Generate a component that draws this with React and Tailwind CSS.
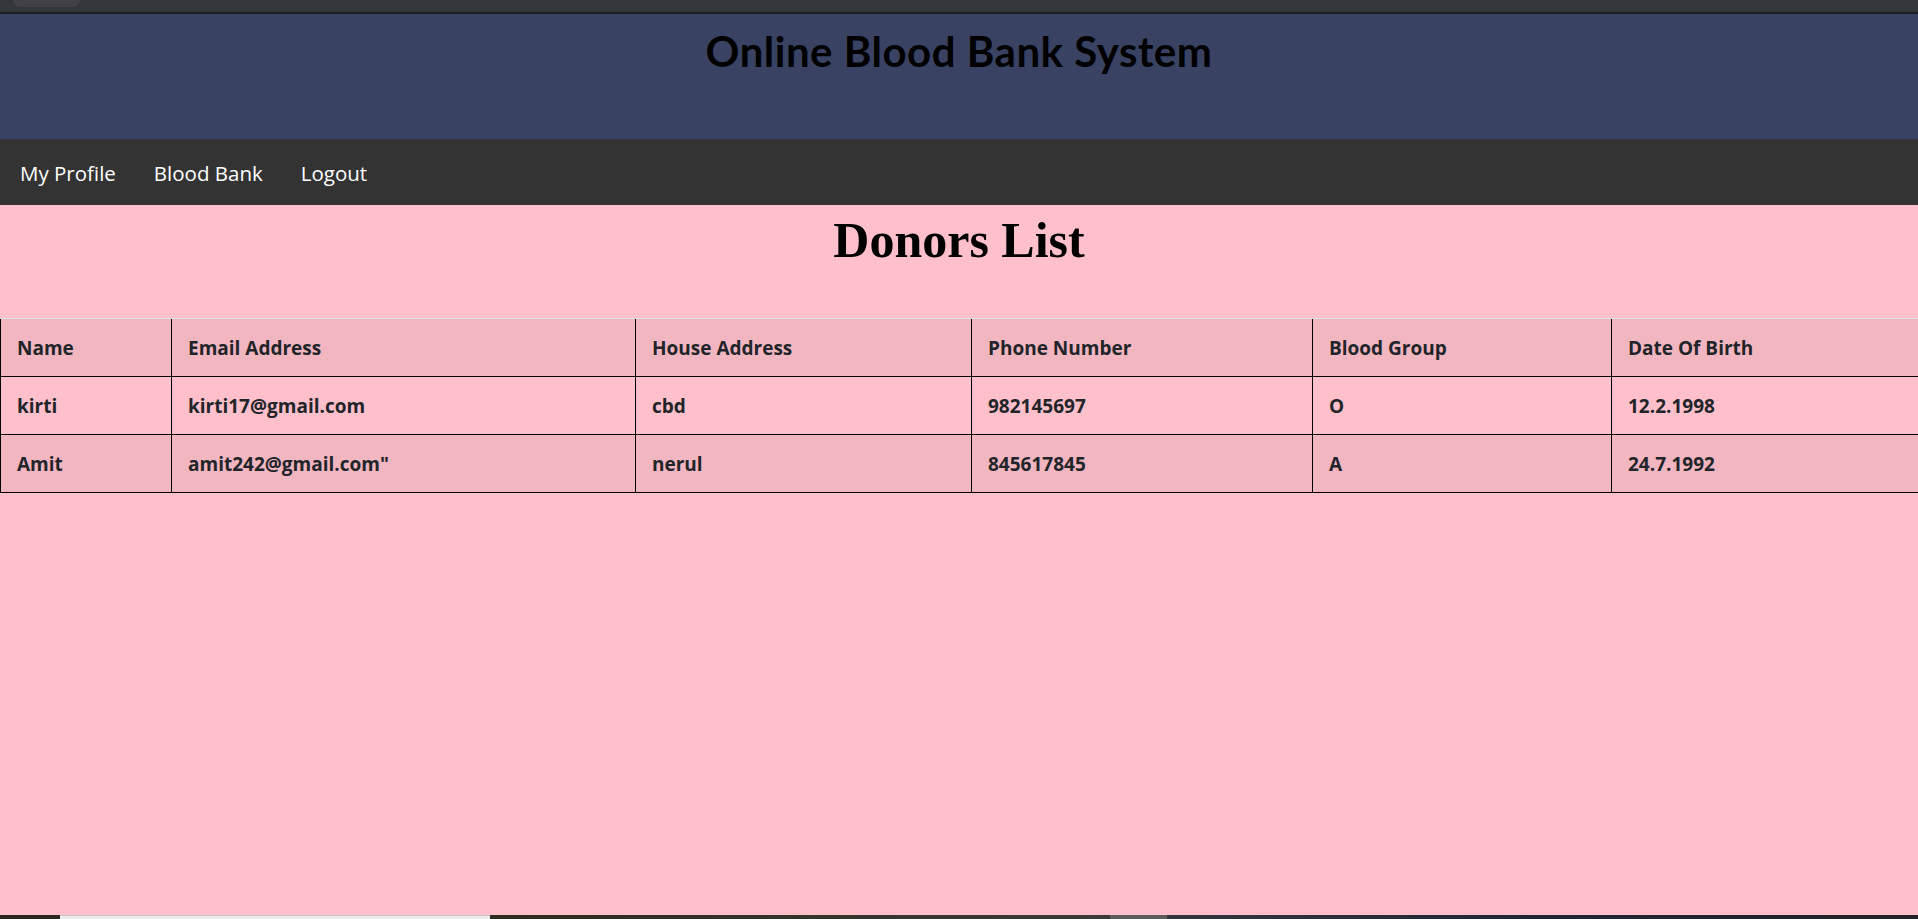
export default function App() {
  const rows = [
    ["kirti", "kirti17@gmail.com", "cbd", "982145697", "O", "12.2.1998"],
    ["Amit", 'amit242@gmail.com"', "nerul", "845617845", "A", "24.7.1992"],
  ];
  const heads = ["Name", "Email Address", "House Address", "Phone Number", "Blood Group", "Date Of Birth"];
  const grid = "grid grid-cols-[171px_464px_336px_341px_299px_1fr]";
  const cell = "border-l border-black flex items-center pl-[16px] pt-[2px] whitespace-nowrap";
  return (
    <div className="w-[1918px] h-[919px] flex flex-col overflow-hidden bg-[#ffc0cb] font-['Segoe_UI','Open_Sans',sans-serif]">
      <div className="h-[12px] bg-[#35363a] flex">
        <div className="ml-[13px] w-[67px] h-[7px] rounded-b-[8px] bg-[#414145]" />
      </div>
      <div className="h-[2px] bg-[#1f1f21]" />
      <header className="h-[125px] bg-[#394262] flex justify-center pt-[12px]">
        <h1 className="text-[42px] leading-[50px] tracking-[0.5px] font-bold text-black font-['Comic_Sans_MS','Lato',sans-serif] h-[50px]">
          Online Blood Bank System
        </h1>
      </header>
      <nav className="h-[66px] bg-[#333333] flex items-center text-white text-[20.5px]">
        <a className="pl-[20px] pr-[19px] pt-[2px]">My Profile</a>
        <a className="px-[19px] pt-[2px]">Blood Bank</a>
        <a className="px-[19px] pt-[2px]">Logout</a>
      </nav>
      <main className="flex-1 flex flex-col">
        <h2 className="mt-[10px] text-center text-[50px] leading-[50px] font-bold text-black font-['Liberation_Serif','Times_New_Roman',serif]">
          Donors List
        </h2>
        <div className="mt-[53px] text-[#212529] font-bold text-[19px]">
          <div className={`${grid} h-[59px] border-t border-t-[#dee2e6] border-b border-b-black bg-[#f2b6c1]`}>
            {heads.map((h) => (
              <div key={h} className={cell}>{h}</div>
            ))}
          </div>
          {rows.map((r, i) => (
            <div key={i} className={`${grid} h-[58px] border-b border-black ${i % 2 === 1 ? "bg-[#f2b6c1]" : ""}`}>
              {r.map((c, j) => (
                <div key={j} className={cell}>{c}</div>
              ))}
            </div>
          ))}
        </div>
      </main>
      <div className="h-[4px] flex">
        <div className="w-[60px] bg-[#2a251d]" />
        <div className="w-[430px] bg-[#ececec] border-t border-[#c4c4c4]" />
        <div className="w-[620px] bg-gradient-to-r from-[#2d2a1e] to-[#3a3a3a]" />
        <div className="w-[57px] bg-[#5c5c5c]" />
        <div className="flex-1 bg-gradient-to-r from-[#33363c] via-[#1f2533] to-[#222226]" />
      </div>
    </div>
  );
}
